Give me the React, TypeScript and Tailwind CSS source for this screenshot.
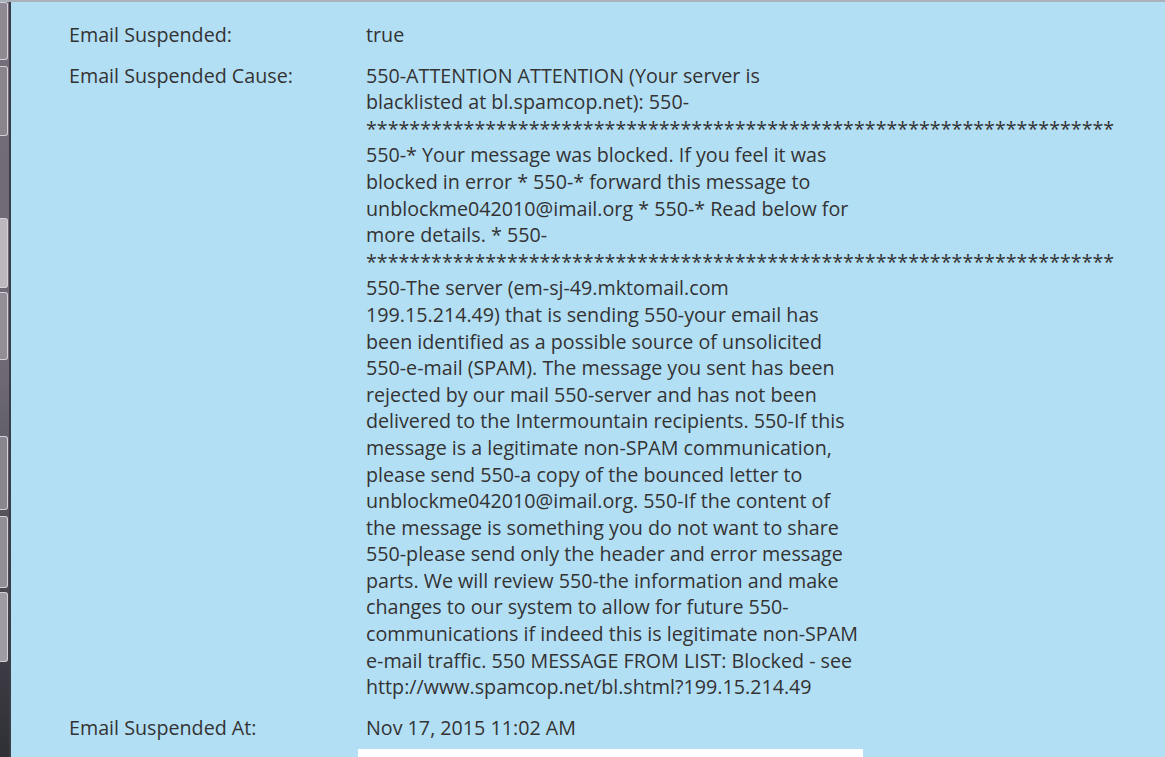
import React from "react";

const stars = "*".repeat(69);

const causeLines = [
  "550-ATTENTION ATTENTION (Your server is",
  "blacklisted at bl.spamcop.net): 550-",
  stars,
  "550-* Your message was blocked. If you feel it was",
  "blocked in error * 550-* forward this message to",
  "unblockme042010@imail.org * 550-* Read below for",
  "more details. * 550-",
  stars,
  "550-The server (em-sj-49.mktomail.com",
  "199.15.214.49) that is sending 550-your email has",
  "been identified as a possible source of unsolicited",
  "550-e-mail (SPAM). The message you sent has been",
  "rejected by our mail 550-server and has not been",
  "delivered to the Intermountain recipients. 550-If this",
  "message is a legitimate non-SPAM communication,",
  "please send 550-a copy of the bounced letter to",
  "unblockme042010@imail.org. 550-If the content of",
  "the message is something you do not want to share",
  "550-please send only the header and error message",
  "parts. We will review 550-the information and make",
  "changes to our system to allow for future 550-",
  "communications if indeed this is legitimate non-SPAM",
  "e-mail traffic. 550 MESSAGE FROM LIST: Blocked - see",
  "http://www.spamcop.net/bl.shtml?199.15.214.49",
];

// side toolbar buttons: [top, height, tone]
const sideButtons: [number, number, string][] = [
  [0, 58, "bg-[#8f8993]"],
  [64, 70, "bg-[#8a848e]"],
  [216, 70, "bg-[#bdb8be]"],
  [290, 68, "bg-[#928d96]"],
  [434, 74, "bg-[#8a868f]"],
  [514, 72, "bg-[#938f98]"],
  [590, 70, "bg-[#a09ca5]"],
];

function SideStrip() {
  return (
    <div className="relative w-[11px] shrink-0 bg-gradient-to-b from-[#756e7a] via-[#6d6874] to-[#2f2f36] border-r-2 border-[#3b3e46]">
      {sideButtons.map(([top, h, tone], i) => (
        <div
          key={i}
          className={`absolute left-0 right-[1px] rounded-r-[3px] border border-l-0 border-[#d4d0d6] ${tone}`}
          style={{ top, height: h }}
        />
      ))}
    </div>
  );
}

function Row({ label, children }: { label: string; children: React.ReactNode }) {
  return (
    <div className="grid grid-cols-[297px_1fr]">
      <div>{label}</div>
      <div>{children}</div>
    </div>
  );
}

export default function App() {
  return (
    <div
      className="w-[1165px] h-[757px] overflow-hidden flex flex-col bg-[#b3dff5] text-[#333333] text-[19.7px] leading-[26.6px]"
      style={{ fontFamily: '"Open Sans", "Noto Sans", sans-serif' }}
    >
      <div className="h-[2px] bg-[#a9b1ba] shrink-0" />
      <div className="flex flex-1 min-h-0">
        <SideStrip />
        <main className="flex-1 pl-[58px] pt-[20px] flex flex-col gap-[14px]">
          <Row label="Email Suspended:">true</Row>
          <Row label="Email Suspended Cause:">
            {causeLines.map((l, i) => (
              <div key={i} className="whitespace-nowrap">
                {l}
              </div>
            ))}
          </Row>
          <Row label="Email Suspended At:">Nov 17, 2015 11:02 AM</Row>
          <div className="grid grid-cols-[297px_1fr] -mt-[6px]">
            <div />
            <div className="-ml-[8px] w-[505px] h-[30px] bg-white" />
          </div>
        </main>
      </div>
    </div>
  );
}
